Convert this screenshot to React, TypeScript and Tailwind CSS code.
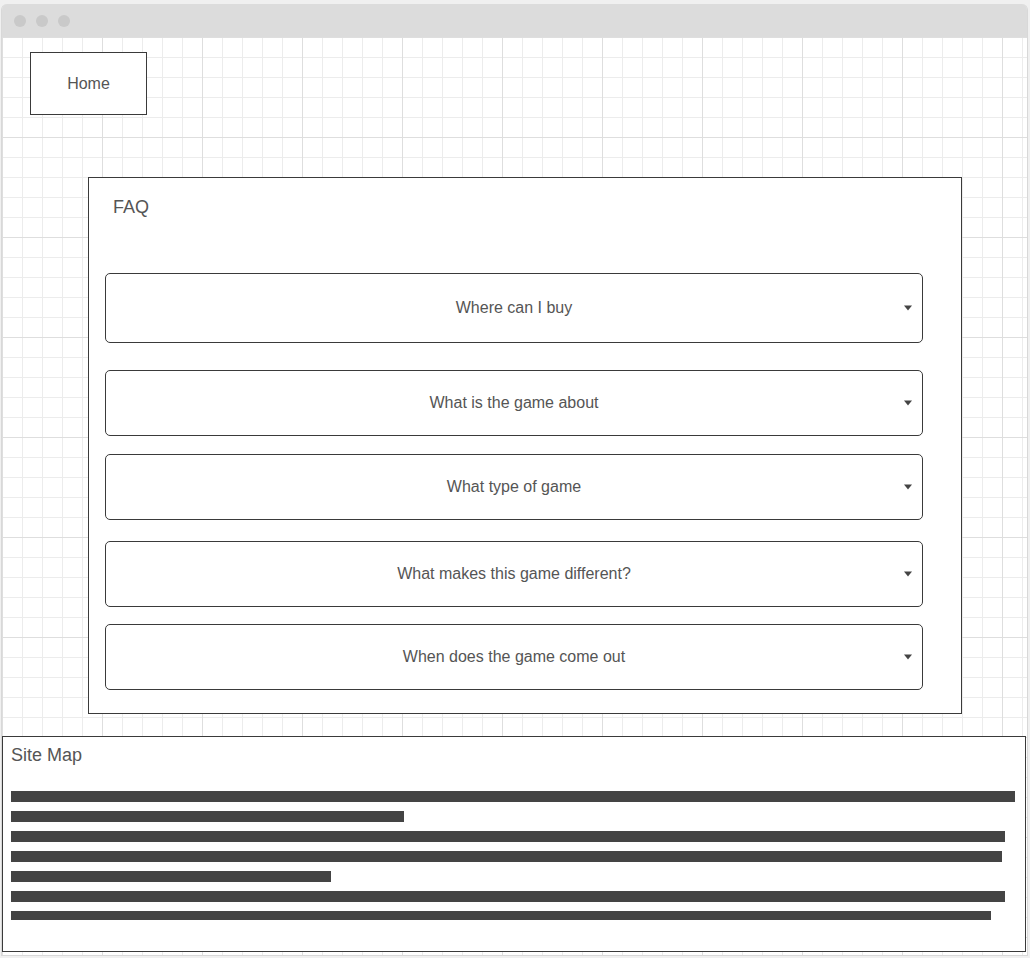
import React from 'react';

const questions = [
  { q: 'Where can I buy', h: 'h-[70px]', mt: 'mt-[55px]' },
  { q: 'What is the game about', h: 'h-[66px]', mt: 'mt-[27px]' },
  { q: 'What type of game', h: 'h-[66px]', mt: 'mt-[18px]' },
  { q: 'What makes this game different?', h: 'h-[66px]', mt: 'mt-[21px]' },
  { q: 'When does the game come out', h: 'h-[66px]', mt: 'mt-[17px]' },
];

const bars = [
  'w-[1004px] h-[11px]',
  'w-[393px] h-[11px]',
  'w-[994px] h-[11px]',
  'w-[991px] h-[11px]',
  'w-[320px] h-[11px]',
  'w-[994px] h-[11px]',
  'w-[980px] h-[9px]',
];

function FaqItem({ q, h, mt }: { q: string; h: string; mt: string }) {
  return (
    <div
      className={`relative ${h} ${mt} ml-[16px] w-[818px] shrink-0 rounded-[5px] border border-[#3a3a3a] bg-white flex items-center justify-center`}
    >
      <span className="text-[16px] leading-[18px] text-[#555]">{q}</span>
      {/* caret */}
      <svg className="absolute right-[10px] top-1/2 -translate-y-1/2" width="8" height="6" viewBox="0 0 8 6">
        <path d="M0 0.5 L8 0.5 L4 5.5 Z" fill="#444" />
      </svg>
    </div>
  );
}

export default function App() {
  return (
    <div className="w-[1030px] h-[958px] overflow-hidden bg-[#f0f0f0] pt-[4px] pl-[1px] font-['Liberation_Sans',Arial,sans-serif]">
      <div className="w-[1027px] h-[952px] flex flex-col overflow-hidden rounded-t-[6px] border border-t-0 border-[#d8d8d8]">
        {/* window bar */}
        <div className="h-[33px] shrink-0 bg-[#dcdcdc] flex items-center gap-[10px] pl-[12px]">
          <div className="w-[12px] h-[12px] rounded-full bg-[#c9c9c9]" />
          <div className="w-[12px] h-[12px] rounded-full bg-[#c9c9c9]" />
          <div className="w-[12px] h-[12px] rounded-full bg-[#c9c9c9]" />
        </div>

        {/* canvas */}
        <div className="flex-1 flex flex-col bg-white [background-image:linear-gradient(to_right,#dedede_1px,transparent_1px),linear-gradient(to_bottom,#dedede_1px,transparent_1px),linear-gradient(to_right,#ececec_1px,transparent_1px),linear-gradient(to_bottom,#ececec_1px,transparent_1px)] [background-size:100px_100px,100px_100px,20px_20px,20px_20px]">
          <div className="ml-[28px] mt-[15px] w-[117px] h-[63px] shrink-0 border border-[#3a3a3a] bg-white flex items-center justify-center">
            <span className="text-[16px] leading-[18px] text-[#555]">Home</span>
          </div>

          <div className="ml-[86px] mt-[62px] w-[874px] h-[537px] shrink-0 border border-[#3a3a3a] bg-white flex flex-col pt-[19px]">
            <h1 className="pl-[24px] text-[18px] leading-[21px] text-[#555]">FAQ</h1>
            {questions.map((item) => (
              <FaqItem key={item.q} {...item} />
            ))}
          </div>

          <div className="mt-[22px] w-[1024px] h-[216px] shrink-0 border border-[#3a3a3a] bg-white flex flex-col pt-[8px] pl-[8px]">
            <h2 className="text-[18px] leading-[21px] text-[#555]">Site Map</h2>
            <div className="mt-[25px] flex flex-col gap-[9px]">
              {bars.map((b, i) => (
                <div key={i} className={`${b} bg-[#444]`} />
              ))}
            </div>
          </div>
        </div>
      </div>
    </div>
  );
}
